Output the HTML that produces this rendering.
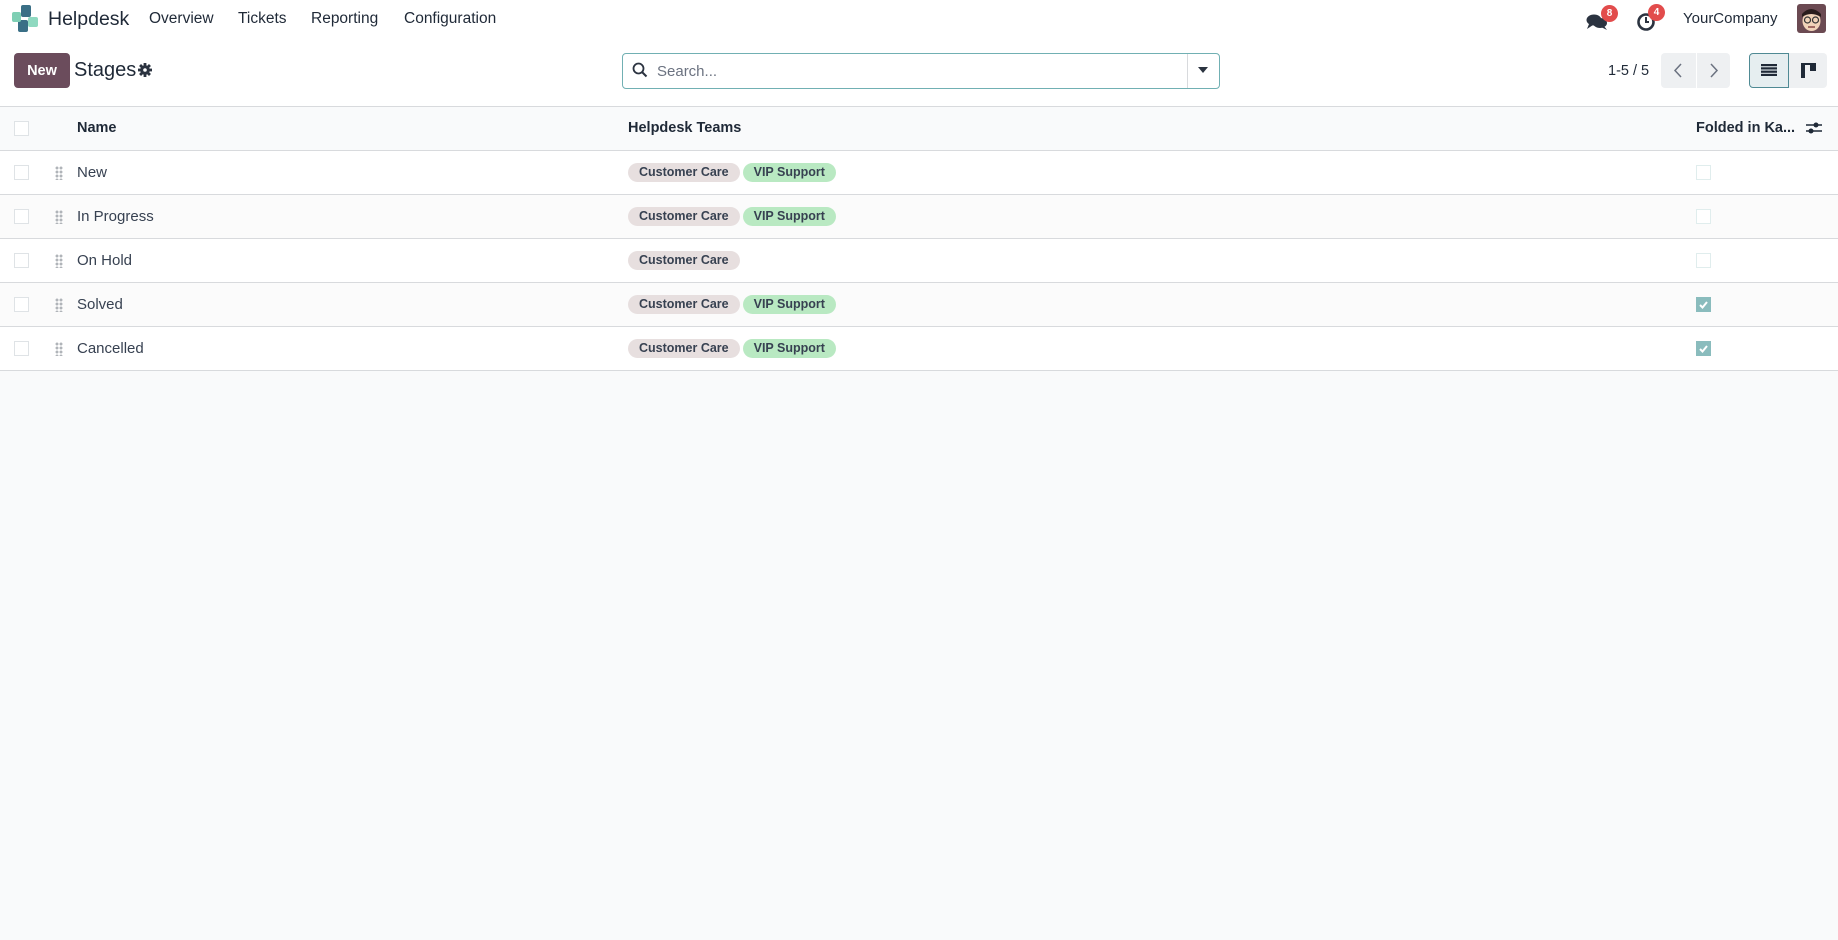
<!DOCTYPE html>
<html><head><meta charset="utf-8">
<style>
*{box-sizing:border-box;margin:0;padding:0}
body{width:1838px;height:940px;background:#f9fafb;font-family:"Liberation Sans",sans-serif;color:#374151;position:relative;overflow:hidden;font-size:15px}
.abs{position:absolute}
.top{position:absolute;left:0;top:0;width:1838px;height:107px;background:#fff;border-bottom:1px solid #d8dadd}
.nav{font-size:15.5px;color:#1f2937;top:10px}
.badge{position:absolute;background:#e24c4c;color:#fff;font-size:10px;font-weight:bold;border-radius:9px;min-width:17px;height:17px;line-height:17px;text-align:center}
table{position:absolute;left:0;top:107px;width:1838px;border-collapse:collapse}
tr{height:44px;border-bottom:1px solid #d8dadd}
tr.h{height:43px}
th{background:#f9fafb;text-align:left;font-weight:bold;font-size:14.5px;color:#1f2937;padding:0}
td{background:#fff;padding:0}
tr.alt td{background:#fbfbfb}
.cb{display:inline-block;width:15px;height:15px;border:1px solid #dfe3e6;background:#fff;vertical-align:middle}
.cbf{border-color:#e0eded}
.cbc{background:#8abcbd;border-color:#8abcbd;position:relative}
.tag{display:inline-block;height:19px;line-height:19px;border-radius:10px;padding:0 11px;font-size:12.5px;font-weight:bold;color:#374151;margin-right:3px}
.cc{background:#e7dfdf}.vip{background:#b9e9c2}
.grip{display:inline-block;width:8px;height:14px;background:radial-gradient(circle,#b0b4b9 1.3px,transparent 1.6px) 0 0/4px 4px;vertical-align:middle}
</style></head><body>
<div class="top"></div>
<svg class="abs" style="left:12px;top:5px" width="26" height="27" viewBox="0 0 26 27">
<rect x="9" y="0" width="10" height="12" rx="2" fill="#3a6f86"/>
<rect x="6" y="15" width="10" height="12" rx="2" fill="#3a6f86"/>
<rect x="0" y="7" width="9" height="10" rx="2" fill="#7fcfb4"/>
<rect x="16" y="12" width="10" height="10" rx="2" fill="#8fd9c0"/>
</svg>
<div class="abs" style="left:48px;top:8px;font-size:19.5px;color:#1f2937">Helpdesk</div>
<div class="abs nav" style="left:149px">Overview</div>
<div class="abs nav" style="left:238px">Tickets</div>
<div class="abs nav" style="left:311px">Reporting</div>
<div class="abs nav" style="left:404px">Configuration</div>
<svg class="abs" style="left:1586px;top:13px" width="22" height="18" viewBox="0 0 22 18"><ellipse cx="8" cy="7" rx="7.5" ry="5.5" fill="#2b3340"/><ellipse cx="14" cy="10" rx="7" ry="5" fill="#2b3340"/><path d="M3 11 L1 16 L7 12Z" fill="#2b3340"/><path d="M18 13 L21 17 L15 14Z" fill="#2b3340"/></svg>
<div class="badge" style="left:1601px;top:5px">8</div>
<svg class="abs" style="left:1636px;top:12px" width="20" height="20" viewBox="0 0 20 20"><circle cx="10" cy="10" r="7.5" fill="none" stroke="#2b3340" stroke-width="2.6"/><path d="M10 5 V10 H13" stroke="#2b3340" stroke-width="2" fill="none"/></svg>
<div class="badge" style="left:1648px;top:4px">4</div>
<div class="abs" style="left:1683px;top:10px;font-size:15px;color:#1f2937">YourCompany</div>
<svg class="abs" style="left:1797px;top:4px" width="29" height="29" viewBox="0 0 29 29"><rect width="29" height="29" rx="3" fill="#6b4a52"/><ellipse cx="14.5" cy="17" rx="9" ry="10" fill="#f0d2b8"/><path d="M5 10 Q14 0 24 10 L24 13 Q14 7 5 13Z" fill="#2a1d1d"/><circle cx="10.5" cy="16" r="3" fill="none" stroke="#333" stroke-width="1.2"/><circle cx="18.5" cy="16" r="3" fill="none" stroke="#333" stroke-width="1.2"/><path d="M11 23 H18" stroke="#733" stroke-width="1.3"/></svg>
<div class="abs" style="left:14px;top:53px;width:56px;height:35px;background:#6b4c5c;border-radius:4px;color:#fff;font-weight:bold;font-size:14.5px;text-align:center;line-height:36px">New</div>
<div class="abs" style="left:74px;top:59px;font-size:20px;color:#1f2937">Stages</div>
<svg class="abs" style="left:138px;top:63px" width="14" height="14" viewBox="0 0 14 14"><g fill="#2b3340"><circle cx="7" cy="7" r="4.8"/><rect x="5.6" y="0" width="2.8" height="14"/><rect x="0" y="5.6" width="14" height="2.8"/><rect x="5.6" y="0" width="2.8" height="14" transform="rotate(45 7 7)"/><rect x="5.6" y="0" width="2.8" height="14" transform="rotate(-45 7 7)"/></g><circle cx="7" cy="7" r="1.8" fill="#fff"/></svg>
<div class="abs" style="left:622px;top:53px;width:598px;height:36px;border:1px solid #71b0b3;border-radius:4px;background:#fff"></div>
<svg class="abs" style="left:632px;top:62px" width="16" height="16" viewBox="0 0 16 16"><circle cx="6.5" cy="6.5" r="5" fill="none" stroke="#2b3340" stroke-width="1.8"/><path d="M10 10 L14.5 14.5" stroke="#2b3340" stroke-width="2"/></svg>
<div class="abs" style="left:657px;top:63px;color:#6b7280;font-size:15px">Search...</div>
<div class="abs" style="left:1187px;top:54px;width:1px;height:34px;background:#d8dadd"></div>
<svg class="abs" style="left:1198px;top:67px" width="10" height="6"><path d="M0 0H10L5 6Z" fill="#2b3340"/></svg>
<div class="abs" style="left:1608px;top:63px;font-size:14.5px;color:#1f2937">1-5 / 5</div>
<div class="abs" style="left:1661px;top:53px;width:69px;height:35px;background:#eef0f2;border-radius:4px"></div>
<div class="abs" style="left:1696px;top:53px;width:1px;height:35px;background:#fff"></div>
<svg class="abs" style="left:1673px;top:63px" width="10" height="15"><path d="M8 1L2 7.5L8 14" stroke="#6b7280" stroke-width="1.5" fill="none"/></svg>
<svg class="abs" style="left:1709px;top:63px" width="10" height="15"><path d="M2 1L8 7.5L2 14" stroke="#6b7280" stroke-width="1.5" fill="none"/></svg>
<div class="abs" style="left:1749px;top:53px;width:40px;height:35px;background:#e6eef0;border:1px solid #4f8a94;border-radius:4px 0 0 4px"></div>
<svg class="abs" style="left:1761px;top:64px" width="16" height="12"><g fill="#1f2937"><rect y="0" width="16" height="2.2"/><rect y="3.3" width="16" height="2.2"/><rect y="6.6" width="16" height="2.2"/><rect y="9.8" width="16" height="2.2"/></g></svg>
<div class="abs" style="left:1789px;top:53px;width:38px;height:35px;background:#eef0f2;border-radius:0 4px 4px 0"></div>
<svg class="abs" style="left:1801px;top:63px" width="15" height="15"><g fill="#1f2937"><rect x="0" y="0" width="4" height="15"/><rect x="4" y="0" width="11" height="2"/><rect x="9" y="2" width="6" height="6"/></g></svg>

<table>
<tr class="h"><th style="width:77px;padding-left:14px"><span class="cb"></span></th><th style="width:551px">Name</th><th style="width:1068px">Helpdesk Teams</th><th>Folded in Ka...</th><th style="width:20px"><svg width="16" height="14" style="vertical-align:middle;margin-left:-12px"><g stroke="#1f2937" stroke-width="1.6"><path d="M0 4H16M0 10H16"/></g><circle cx="10" cy="4" r="2.5" fill="#1f2937"/><circle cx="5" cy="10" r="2.5" fill="#1f2937"/></svg></th></tr>
<tr><td style="padding-left:14px"><span class="cb"></span><span class="grip" style="margin-left:26px"></span></td><td>New</td><td><span class="tag cc">Customer Care</span><span class="tag vip">VIP Support</span></td><td><span class="cb cbf"></span></td><td></td></tr>
<tr class="alt"><td style="padding-left:14px"><span class="cb"></span><span class="grip" style="margin-left:26px"></span></td><td>In Progress</td><td><span class="tag cc">Customer Care</span><span class="tag vip">VIP Support</span></td><td><span class="cb cbf"></span></td><td></td></tr>
<tr><td style="padding-left:14px"><span class="cb"></span><span class="grip" style="margin-left:26px"></span></td><td>On Hold</td><td><span class="tag cc">Customer Care</span></td><td><span class="cb cbf"></span></td><td></td></tr>
<tr class="alt"><td style="padding-left:14px"><span class="cb"></span><span class="grip" style="margin-left:26px"></span></td><td>Solved</td><td><span class="tag cc">Customer Care</span><span class="tag vip">VIP Support</span></td><td><span class="cb cbc"><svg width="13" height="13" style="position:absolute;left:0;top:0"><path d="M3 7L5.5 9.5L10 4" stroke="#fff" stroke-width="2" fill="none"/></svg></span></td><td></td></tr>
<tr><td style="padding-left:14px"><span class="cb"></span><span class="grip" style="margin-left:26px"></span></td><td>Cancelled</td><td><span class="tag cc">Customer Care</span><span class="tag vip">VIP Support</span></td><td><span class="cb cbc"><svg width="13" height="13" style="position:absolute;left:0;top:0"><path d="M3 7L5.5 9.5L10 4" stroke="#fff" stroke-width="2" fill="none"/></svg></span></td><td></td></tr>
</table>
</body></html>
